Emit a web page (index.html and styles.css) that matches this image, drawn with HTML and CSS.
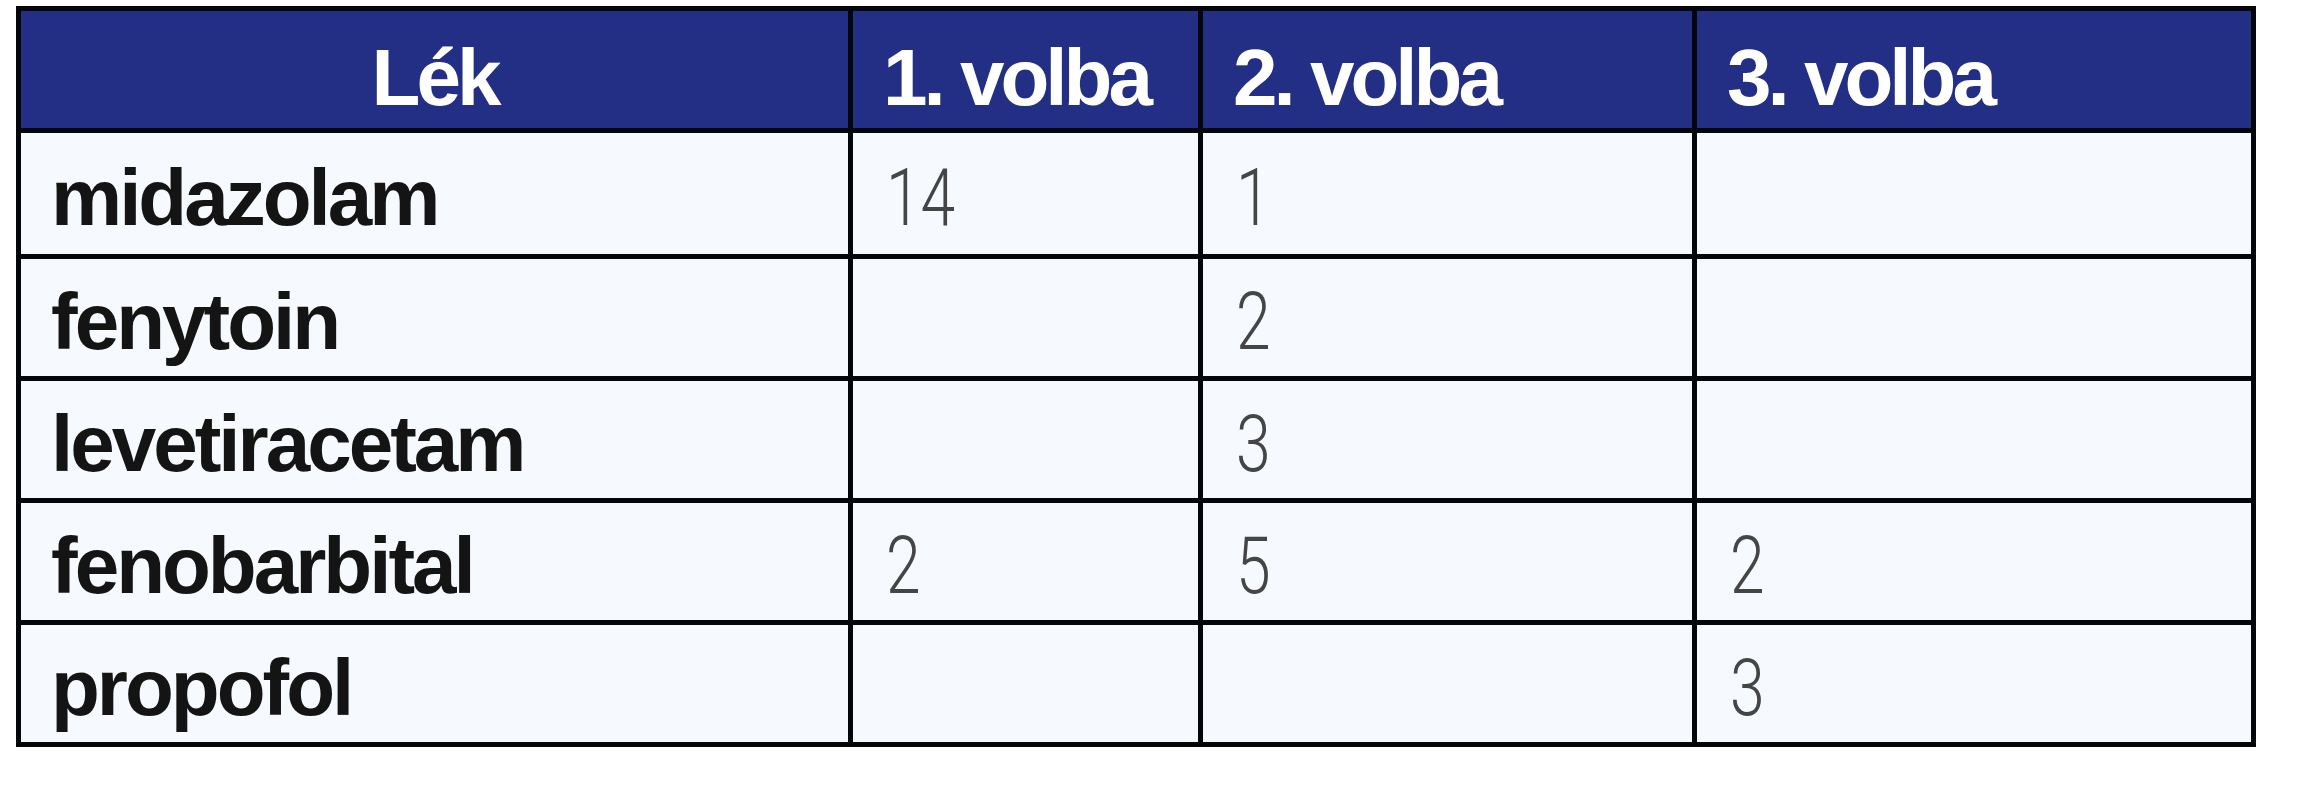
FILE: index.html
```html
<!DOCTYPE html>
<html lang="cs">
<head>
<meta charset="utf-8">
<title>Lék – volba</title>
<link rel="stylesheet" href="styles.css">
</head>
<body>
<div class="page">
  <table class="drugs">
    <colgroup>
      <col class="col-name">
      <col class="col-1">
      <col class="col-2">
      <col class="col-3">
    </colgroup>
    <thead>
      <tr>
        <th class="center">Lék</th>
        <th>1. volba</th>
        <th>2. volba</th>
        <th>3. volba</th>
      </tr>
    </thead>
    <tbody>
      <tr class="first">
        <td class="name">midazolam</td>
        <td class="num"><span>14</span></td>
        <td class="num"><span>1</span></td>
        <td class="num"></td>
      </tr>
      <tr>
        <td class="name">fenytoin</td>
        <td class="num"></td>
        <td class="num"><span>2</span></td>
        <td class="num"></td>
      </tr>
      <tr>
        <td class="name">levetiracetam</td>
        <td class="num"></td>
        <td class="num"><span>3</span></td>
        <td class="num"></td>
      </tr>
      <tr>
        <td class="name">fenobarbital</td>
        <td class="num"><span>2</span></td>
        <td class="num"><span>5</span></td>
        <td class="num"><span>2</span></td>
      </tr>
      <tr>
        <td class="name">propofol</td>
        <td class="num"></td>
        <td class="num"></td>
        <td class="num"><span>3</span></td>
      </tr>
    </tbody>
  </table>
</div>
</body>
</html>
```

FILE: styles.css
```css
html, body {
  margin: 0;
  padding: 0;
  background: #ffffff;
}

.page {
  padding: 6px 0 0 16px;
}

.drugs {
  border-collapse: collapse;
  table-layout: fixed;
  width: 2235px;
  border: 5px solid #05060c;
  font-family: "Liberation Sans", Arial, sans-serif;
}

.col-name { width: 832px; }
.col-1 { width: 350px; }
.col-2 { width: 494px; }
.col-3 { width: 559px; }

.drugs th,
.drugs td {
  border: 5px solid #05060c;
  padding: 0 0 0 30px;
  text-align: left;
  white-space: nowrap;
  overflow: hidden;
  font-size: 80px;
  line-height: 80px;
}

.drugs thead tr {
  height: 122px;
}

.drugs th {
  background: #222f84;
  color: #ffffff;
  font-weight: 700;
  letter-spacing: -4px;
  padding-top: 16px;
  vertical-align: middle;
}

.drugs th.center {
  text-align: center;
  padding-left: 0;
}

.drugs tbody tr {
  height: 122px;
}

.drugs tbody tr.first {
  height: 126px;
}

.drugs td {
  background: #f6f9fd;
  vertical-align: middle;
  padding-top: 8px;
}

.drugs td.name {
  color: #141414;
  font-weight: 700;
  letter-spacing: -3px;
}

.drugs td.num {
  padding-left: 33px;
}

.drugs td.num span {
  display: inline-block;
  font-family: Roboto, "Liberation Sans", sans-serif;
  font-weight: 300;
  font-size: 80px;
  line-height: 80px;
  color: #454545;
  transform: scaleX(0.78);
  transform-origin: left center;
}
```
